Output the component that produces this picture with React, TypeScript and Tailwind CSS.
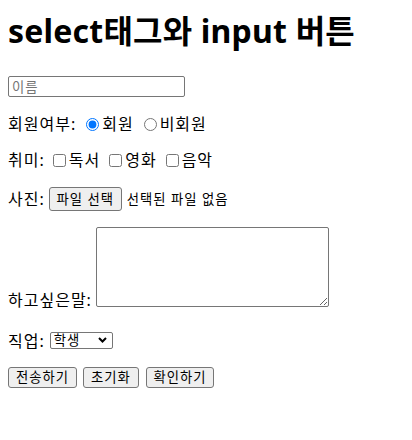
import React from "react";

export default function App() {
  const btn =
    "h-[21px] bg-[#efefef] border border-[#767676] rounded-[3px] text-[13.33px] leading-[17px] tracking-[1px] text-black text-center";
  return (
    <div className="px-2 font-['Noto_Sans','Noto_Sans_CJK_KR',sans-serif] text-black text-[16px] leading-[20px] tracking-[1px]">
      <h1 className="mt-[12px] text-[32px] leading-[38px] font-bold tracking-[0.2px]">select태그와 input 버튼</h1>

      <div className="mt-[26px]">
        <input
          type="text"
          placeholder="이름"
          className="w-[177px] h-[21px] px-[3px] border border-[#767676] rounded-[2px] text-[13.33px] leading-[17px] tracking-[1px] placeholder:text-[#757575] block"
        />
      </div>

      <div className="mt-[17px] h-[20px] flex items-center">
        <span>회원여부:</span>
        <input type="radio" name="m" defaultChecked className="w-[13px] h-[13px] ml-[10px] mr-[3px]" />
        <span>회원</span>
        <input type="radio" name="m" className="w-[13px] h-[13px] ml-[10px] mr-[3px]" />
        <span>비회원</span>
      </div>

      <div className="mt-[16px] h-[20px] flex items-center">
        <span>취미:</span>
        <input type="checkbox" className="w-[13px] h-[13px] ml-[8px] mr-[3px]" />
        <span>독서</span>
        <input type="checkbox" className="w-[13px] h-[13px] ml-[9px] mr-[3px]" />
        <span>영화</span>
        <input type="checkbox" className="w-[13px] h-[13px] ml-[9px] mr-[3px]" />
        <span>음악</span>
      </div>

      <div className="mt-[17px] h-[24px] flex items-center">
        <span>사진:</span>
        <button className="ml-[4px] w-[73px] h-[24px] bg-[#efefef] border border-[#767676] rounded-[3px] text-[13.33px] leading-[17px] tracking-[1px] text-center">
          파일 선택
        </button>
        <span className="ml-[5px] text-[13.33px] tracking-[1px]">선택된 파일 없음</span>
      </div>

      <div className="mt-[16px] flex items-end">
        <span className="leading-[14px]">하고싶은말:</span>
        <textarea className="ml-[4px] w-[233px] h-[80px] border border-[#767676] rounded-[2px] resize" />
      </div>

      <div className="mt-[25px] h-[17px] flex items-center">
        <span>직업:</span>
        <div className="relative ml-[5px]">
          <select className="appearance-none w-[63px] h-[17px] pl-[3px] border border-[#767676] rounded-[2px] text-[13.33px] leading-[15px] tracking-[1px] block">
            <option>학생</option>
            <option>직장인</option>
          </select>
          <svg
            className="pointer-events-none absolute right-[6px] top-[5px]"
            width="9"
            height="6"
            viewBox="0 0 9 6"
          >
            <path d="M1 1 L4.5 4.5 L8 1" stroke="black" strokeWidth="2" fill="none" />
          </svg>
        </div>
      </div>

      <div className="mt-[18px] flex items-center">
        <button className={`${btn} w-[69px]`}>전송하기</button>
        <button className={`${btn} w-[56px] ml-[6px]`}>초기화</button>
        <button className={`${btn} w-[68px] ml-[7px]`}>확인하기</button>
      </div>
    </div>
  );
}
